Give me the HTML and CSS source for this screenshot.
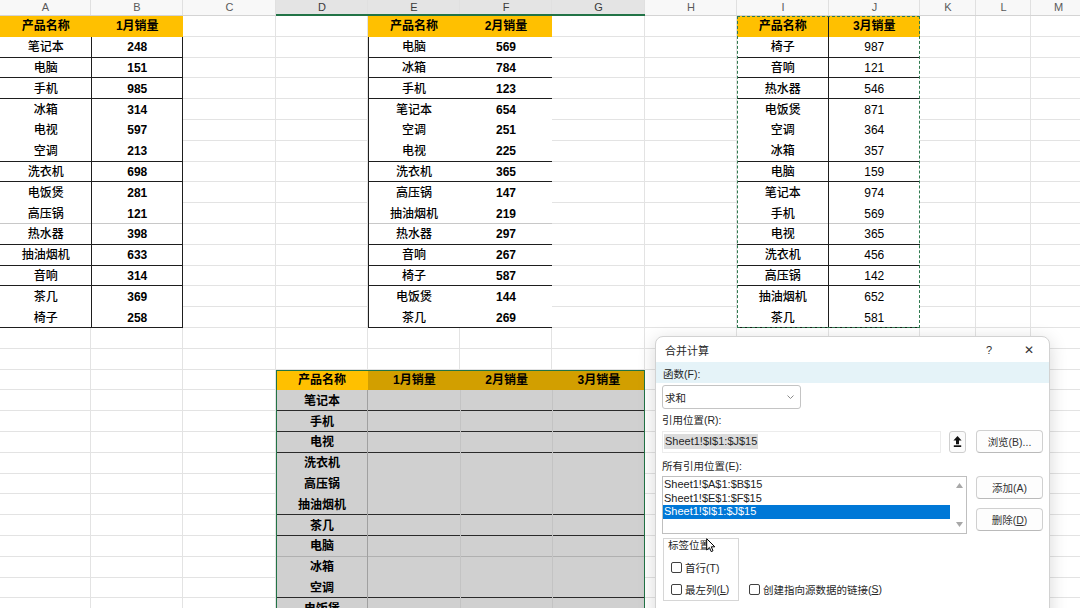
FILE: index.html
```html
<!DOCTYPE html>
<html lang="zh-CN">
<head>
  <meta charset="UTF-8">
  <title>合并计算</title>
  <link rel="stylesheet" href="styles.css">
</head>
<body>
  <div id="sheet">
    <!-- Column letters -->
    <div class="colhead">A</div>
    <div class="colhead">B</div>
    <div class="colhead">C</div>
    <div class="colhead sel">D</div>
    <div class="colhead sel">E</div>
    <div class="colhead sel">F</div>
    <div class="colhead sel">G</div>
    <div class="colhead">H</div>
    <div class="colhead">I</div>
    <div class="colhead">J</div>
    <div class="colhead">K</div>
    <div class="colhead">L</div>
    <div class="colhead">M</div>

    <!-- Sheet gridlines -->
    <div class="gridlines">
      <span></span><span></span><span></span><span></span><span></span><span></span><span></span>
      <span></span><span></span><span></span><span></span><span></span><span></span>
    </div>

    <!-- Source range 1: A1:B15 -->
    <table class="range t1">
      <tr><th>产品名称</th><th>1月销量</th></tr>
      <tr class="sep"><td class="name">笔记本</td><td class="num">248</td></tr>
      <tr class="sep"><td class="name">电脑</td><td class="num">151</td></tr>
      <tr class="sep"><td class="name">手机</td><td class="num">985</td></tr>
      <tr><td class="name">冰箱</td><td class="num">314</td></tr>
      <tr><td class="name">电视</td><td class="num">597</td></tr>
      <tr class="sep"><td class="name">空调</td><td class="num">213</td></tr>
      <tr class="sep"><td class="name">洗衣机</td><td class="num">698</td></tr>
      <tr><td class="name">电饭煲</td><td class="num">281</td></tr>
      <tr class="faint"><td class="name">高压锅</td><td class="num">121</td></tr>
      <tr class="sep"><td class="name">热水器</td><td class="num">398</td></tr>
      <tr class="sep"><td class="name">抽油烟机</td><td class="num">633</td></tr>
      <tr class="sep"><td class="name">音响</td><td class="num">314</td></tr>
      <tr><td class="name">茶几</td><td class="num">369</td></tr>
      <tr class="sep"><td class="name">椅子</td><td class="num">258</td></tr>
    </table>

    <!-- Source range 2: E1:F15 -->
    <table class="range t2">
      <tr><th>产品名称</th><th>2月销量</th></tr>
      <tr class="sep"><td class="name">电脑</td><td class="num">569</td></tr>
      <tr class="sep"><td class="name">冰箱</td><td class="num">784</td></tr>
      <tr class="sep"><td class="name">手机</td><td class="num">123</td></tr>
      <tr><td class="name">笔记本</td><td class="num">654</td></tr>
      <tr><td class="name">空调</td><td class="num">251</td></tr>
      <tr class="sep"><td class="name">电视</td><td class="num">225</td></tr>
      <tr class="sep"><td class="name">洗衣机</td><td class="num">365</td></tr>
      <tr><td class="name">高压锅</td><td class="num">147</td></tr>
      <tr class="faint"><td class="name">抽油烟机</td><td class="num">219</td></tr>
      <tr class="sep"><td class="name">热水器</td><td class="num">297</td></tr>
      <tr class="sep"><td class="name">音响</td><td class="num">267</td></tr>
      <tr class="sep"><td class="name">椅子</td><td class="num">587</td></tr>
      <tr><td class="name">电饭煲</td><td class="num">144</td></tr>
      <tr class="sep"><td class="name">茶几</td><td class="num">269</td></tr>
    </table>

    <!-- Source range 3: I1:J15 (copied, marching ants) -->
    <table class="range t3">
      <tr><th class="name">产品名称</th><th>3月销量</th></tr>
      <tr class="sep"><td class="name">椅子</td><td class="num">987</td></tr>
      <tr class="sep"><td class="name">音响</td><td class="num">121</td></tr>
      <tr class="sep"><td class="name">热水器</td><td class="num">546</td></tr>
      <tr><td class="name">电饭煲</td><td class="num">871</td></tr>
      <tr><td class="name">空调</td><td class="num">364</td></tr>
      <tr class="sep"><td class="name">冰箱</td><td class="num">357</td></tr>
      <tr class="sep"><td class="name">电脑</td><td class="num">159</td></tr>
      <tr><td class="name">笔记本</td><td class="num">974</td></tr>
      <tr class="faint"><td class="name">手机</td><td class="num">569</td></tr>
      <tr class="sep"><td class="name">电视</td><td class="num">365</td></tr>
      <tr class="sep"><td class="name">洗衣机</td><td class="num">456</td></tr>
      <tr class="sep"><td class="name">高压锅</td><td class="num">142</td></tr>
      <tr><td class="name">抽油烟机</td><td class="num">652</td></tr>
      <tr class="sep"><td class="name">茶几</td><td class="num">581</td></tr>
    </table>

    <!-- Target range D18:G29 (selected) -->
    <table class="range target">
      <tr><th class="active">产品名称</th><th>1月销量</th><th>2月销量</th><th>3月销量</th></tr>
      <tr class="sep"><td class="name">笔记本</td><td></td><td></td><td></td></tr>
      <tr class="sep"><td class="name">手机</td><td></td><td></td><td></td></tr>
      <tr class="sep"><td class="name">电视</td><td></td><td></td><td></td></tr>
      <tr><td class="name">洗衣机</td><td></td><td></td><td></td></tr>
      <tr><td class="name">高压锅</td><td></td><td></td><td></td></tr>
      <tr class="sep"><td class="name">抽油烟机</td><td></td><td></td><td></td></tr>
      <tr class="sep"><td class="name">茶几</td><td></td><td></td><td></td></tr>
      <tr class="faint"><td class="name">电脑</td><td></td><td></td><td></td></tr>
      <tr><td class="name">冰箱</td><td></td><td></td><td></td></tr>
      <tr class="sep"><td class="name">空调</td><td></td><td></td><td></td></tr>
      <tr><td class="name">电饭煲</td><td></td><td></td><td></td></tr>
    </table>
  </div>

  <!-- Consolidate dialog -->
  <div class="dialog">
    <div class="dlg-title">
      <span class="dlg-name">合并计算</span>
      <span class="dlg-icon">?</span>
      <span class="dlg-icon close">✕</span>
    </div>

    <div class="band"><span>函数(F):</span></div>
    <div class="select">
      <span>求和</span>
      <svg width="7" height="4" viewBox="0 0 7 4"><polyline points="0.5,0.5 3.5,3.5 6.5,0.5" fill="none" stroke="#8a8a8a" stroke-width="1"/></svg>
    </div>

    <div class="lbl">引用位置(R):</div>
    <div class="ref-row">
      <div class="input"><span class="hl">Sheet1!$I$1:$J$15</span></div>
      <button class="pick">
        <svg width="9" height="11" viewBox="0 0 9 11"><path d="M4.5 0 L8.6 4.6 H6 V8.2 H3 V4.6 H0.4 Z" fill="#111"/><rect x="0.8" y="9.3" width="7.4" height="1.7" fill="#111"/></svg>
      </button>
      <button class="btn">浏览(B)...</button>
    </div>

    <div class="lbl lbl-all">所有引用位置(E):</div>
    <div class="list-row">
      <div class="listbox">
        <div class="items">
          <div class="item">Sheet1!$A$1:$B$15</div>
          <div class="item">Sheet1!$E$1:$F$15</div>
          <div class="item selected">Sheet1!$I$1:$J$15</div>
        </div>
        <div class="scroll">
          <svg width="7" height="5" viewBox="0 0 7 5"><path d="M3.5 0 L7 5 H0 Z" fill="#a8a8a8"/></svg>
          <svg width="7" height="5" viewBox="0 0 7 5"><path d="M0 0 H7 L3.5 5 Z" fill="#a8a8a8"/></svg>
        </div>
      </div>
      <div class="side-btns">
        <button class="btn">添加(A)</button>
        <button class="btn">删除(<u>D</u>)</button>
      </div>
    </div>

    <div class="bottom-row">
      <div class="group">
        <div class="caption">标签位置</div>
        <label class="check"><span class="box"></span>首行(T)</label>
        <label class="check"><span class="box"></span>最左列(<u>L</u>)</label>
      </div>
      <label class="check link"><span class="box"></span>创建指向源数据的链接(<u>S</u>)</label>
    </div>

    <svg class="cursor" width="10" height="15" viewBox="0 0 10 15"><path d="M0.7 0.7 V12 L3.4 9.5 L5.2 13.6 L7 12.8 L5.3 8.8 H8.8 Z" fill="#fff" stroke="#000" stroke-width="1"/></svg>
  </div>
</body>
</html>
```

FILE: styles.css
```css
:root {
  /* Sheet geometry */
  --cols: 91px 92px 93px 92px 92px 92px 93px 92px 92px 91px 56px 55px 55px;
  --row: 20.8px;

  /* Colours */
  --grid-line: #e3e3e3;
  --excel-green: #217346;
  --header-yellow: #ffc000;
  --rule: #1e1e1e;

  --ui-font: "Liberation Sans", "Noto Sans CJK SC", sans-serif;
}

* {
  box-sizing: border-box;
}

html, body {
  margin: 0;
  padding: 0;
}

body {
  width: 1080px;
  height: 608px;
  overflow: hidden;
  position: relative;
  background: #fff;
  font-family: var(--ui-font);
}

/* Spreadsheet */
#sheet {
  display: grid;
  grid-template-columns: var(--cols);
  grid-template-rows: 16px repeat(29, var(--row));
  width: 1086px;
}

.colhead {
  font-size: 11px;
  line-height: 15px;
  color: #5a5a5a;
  text-align: center;
  background: #f8f8f8;
  border-bottom: 1px solid #d4d4d4;
  box-shadow: inset -1px 0 #e0e0e0;
}
.colhead.sel {
  background: #e4e4e4;
  color: #3a3a3a;
  border-bottom: 2px solid var(--excel-green);
  line-height: 14px;
}

.gridlines {
  grid-column: 1 / -1;
  grid-row: 2 / -1;
  display: grid;
  grid-template-columns: var(--cols);
  background: repeating-linear-gradient(to bottom,
    transparent 0 calc(var(--row) - 1px),
    var(--grid-line) calc(var(--row) - 1px) var(--row));
}
.gridlines span {
  border-right: 1px solid var(--grid-line);
}

/* Data ranges */
.range {
  border-spacing: 0;
  table-layout: fixed;
  width: 100%;
  align-self: start;
  font-size: 12px;
  color: #000;
}
.range th,
.range td {
  height: var(--row);
  padding: 0;
  text-align: center;
  line-height: 14px;
  background: #fff;
  box-shadow:
    inset -1px 0 var(--vr, transparent),
    inset 1px 0 var(--vl, transparent),
    inset 0 -1px var(--hb, transparent);
}
.range th {
  background: var(--header-yellow);
  font-weight: bold;
}
.range td.name {
  font-weight: 500;
}
.range td.num {
  font-weight: bold;
}
.range tr.sep td {
  --hb: var(--rule);
}
.range tr.faint td {
  --hb: #c8c8c8;
}

.t1 {
  grid-column: 1 / 3;
  grid-row: 2 / 17;
}
.t1 td {
  --vr: var(--rule);
}

.t2 {
  grid-column: 5 / 7;
  grid-row: 2 / 17;
}
.t2 td.name {
  --vl: var(--rule);
}

.t3 {
  grid-column: 9 / 11;
  grid-row: 2 / 17;
  outline: 1.5px dashed #2f7a4f;
  outline-offset: -1px;
}
.t3 .name {
  --vr: var(--rule);
}
.t3 td.num {
  font-weight: normal;
}

/* Selected target range */
.target {
  grid-column: 4 / 8;
  grid-row: 19 / 31;
  outline: 1.5px solid var(--excel-green);
  outline-offset: -1px;
}
.target th {
  background: #d29f00;
}
.target th.active {
  background: var(--header-yellow);
}
.target td {
  background: #d0d0d0;
  --vr: #c3c3c3;
}
.target td.name {
  font-weight: bold;
  --vr: #a0a0a0;
}
.target tr.sep td {
  --hb: #2a2a2a;
}
.target tr.faint td {
  --hb: #b0b0b0;
}

/* Dialog */
.dialog {
  position: absolute;
  left: 655px;
  top: 336px;
  width: 395px;
  height: 290px;
  padding: 0 6px;
  background: #fff;
  border: 1px solid #d2d2d2;
  border-radius: 8px;
  box-shadow: 0 4px 18px rgba(0, 0, 0, 0.16);
  font-size: 10.5px;
  color: #262626;
}

.dlg-title {
  display: flex;
  align-items: center;
  height: 25px;
  margin-right: -6px;
}
.dlg-name {
  flex: 1;
  padding-left: 3px;
  font-size: 11px;
}
.dlg-icon {
  width: 40px;
  text-align: center;
  font-size: 11px;
  color: #333;
}
.dlg-icon.close {
  font-size: 12px;
}

.band {
  height: 21px;
  margin: 0 -6px;
  padding: 6px 0 0 7px;
  line-height: 13px;
  background: #e5f3f8;
}

.select {
  display: flex;
  align-items: center;
  justify-content: space-between;
  width: 139px;
  height: 24px;
  margin-top: 2px;
  padding: 0 6px 0 2px;
  border: 1px solid #c4c4c4;
  border-radius: 3px;
}

.lbl {
  height: 16px;
  margin-top: 3px;
  line-height: 16px;
}
.lbl-all {
  margin-top: 5px;
}

.ref-row {
  display: flex;
  align-items: center;
  height: 23px;
  margin-top: 2px;
}
.input {
  display: flex;
  align-items: center;
  width: 279px;
  height: 22px;
  padding-left: 1px;
  border: 1px solid #ececec;
  font-size: 11px;
}
.hl {
  background: #dcdcdc;
  line-height: 15px;
  padding: 0 1px;
}
.pick {
  display: flex;
  align-items: center;
  justify-content: center;
  width: 17px;
  height: 22px;
  margin-left: 8px;
  padding: 0;
  background: #fbfbfb;
  border: 1px solid #cfcfcf;
  border-radius: 3px;
}

.btn {
  width: 67px;
  height: 23px;
  margin-left: 10px;
  padding: 0;
  font: inherit;
  color: #333;
  background: #fdfdfd;
  border: 1px solid #d0d0d0;
  border-bottom-color: #bababa;
  border-radius: 4px;
}

.list-row {
  display: flex;
  margin-top: 2px;
}
.listbox {
  display: flex;
  width: 305px;
  height: 58px;
  border: 1px solid #bfbfbf;
  font-size: 11px;
}
.items {
  flex: 1;
  padding-top: 1px;
}
.item {
  height: 13.5px;
  line-height: 13.5px;
  padding-left: 1px;
  color: #222;
}
.item.selected {
  background: #0078d7;
  color: #fff;
}
.scroll {
  display: flex;
  flex-direction: column;
  align-items: center;
  justify-content: space-between;
  width: 16px;
  padding: 6px 0 6px 2px;
}
.side-btns {
  display: flex;
  flex-direction: column;
  gap: 9px;
  margin-left: -1px;
}

.bottom-row {
  display: flex;
  align-items: flex-end;
  margin-top: 4px;
}
.group {
  width: 76px;
  height: 63px;
  margin-left: 1px;
  padding-left: 7px;
  border: 1px solid #d6d6d6;
}
.caption {
  width: fit-content;
  margin: 0 0 4px -5px;
  padding: 0 2px;
  line-height: 13px;
  background: #fff;
}
.check {
  display: flex;
  align-items: center;
  height: 22px;
  white-space: nowrap;
}
.box {
  width: 11px;
  height: 11px;
  margin-right: 3px;
  border: 1px solid #404040;
  border-radius: 2px;
  background: #fff;
}
.check.link {
  margin: 0 0 1px 10px;
}

.cursor {
  position: absolute;
  left: 50px;
  top: 201px;
}
```
